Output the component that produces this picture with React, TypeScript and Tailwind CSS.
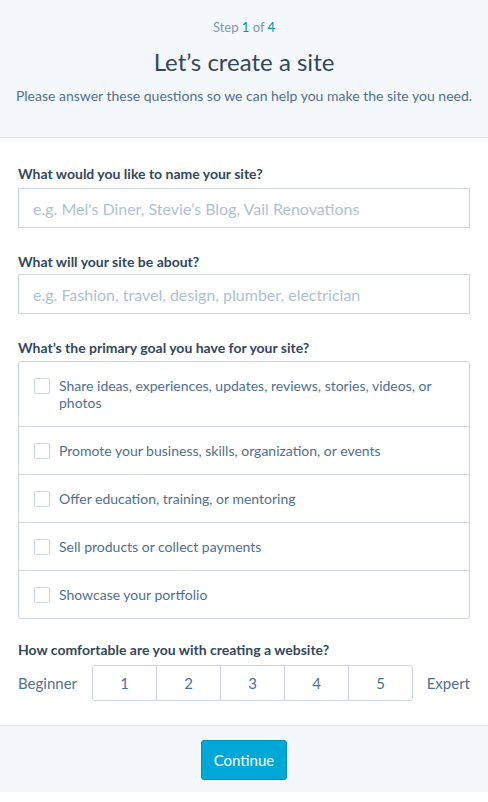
import { useState } from "react";

const goals = [
  "Share ideas, experiences, updates, reviews, stories, videos, or photos",
  "Promote your business, skills, organization, or events",
  "Offer education, training, or mentoring",
  "Sell products or collect payments",
  "Showcase your portfolio",
];

export default function App() {
  const [checked, setChecked] = useState<number[]>([]);
  const [level, setLevel] = useState<number | null>(null);

  return (
    <div
      className="min-h-[802px] bg-white text-[#33475b]"
      style={{ fontFamily: "Lato, 'Liberation Sans', sans-serif" }}
    >
      <header className="flex h-[138px] flex-col items-center border-b border-[#dfe3eb] bg-[#f5f8fa] pt-[17px]">
        <p className="text-[13px] leading-[20px] text-[#7c98b6]">
          Step <span className="text-[#0091ae]">1</span> of <span className="text-[#0091ae]">4</span>
        </p>
        <h1 className="mt-[10px] text-[24px] leading-[30px]">Let’s create a site</h1>
        <p className="mt-[9px] text-[14px] leading-[20px] text-[#516f90]">
          Please answer these questions so we can help you make the site you need.
        </p>
      </header>

      <form className="px-[18px] pt-[26px] pb-[24px]">
        <label className="block text-[14px] font-bold leading-[20px]">
          What would you like to name your site?
        </label>
        <input
          className="mt-[4px] block h-[40px] w-full border border-[#cbd6e2] px-[14px] text-[16px] placeholder:text-[#b0c1d4] outline-none"
          placeholder="e.g. Mel's Diner, Stevie’s Blog, Vail Renovations"
        />

        <label className="mt-[24px] block text-[14px] font-bold leading-[20px]">
          What will your site be about?
        </label>
        <input
          className="mt-[2px] block h-[40px] w-full border border-[#cbd6e2] px-[14px] text-[16px] placeholder:text-[#b0c1d4] outline-none"
          placeholder="e.g. Fashion, travel, design, plumber, electrician"
        />

        <label className="mt-[24px] block text-[14px] font-bold leading-[20px]">
          What’s the primary goal you have for your site?
        </label>
        <div className="mt-[3px] rounded-[3px] border border-[#cbd6e2]">
          {goals.map((g, i) => (
            <label
              key={g}
              className="flex cursor-pointer items-start gap-[9px] border-b border-[#cbd6e2] px-[15px] py-[15px] last:border-b-0"
            >
              <input
                type="checkbox"
                checked={checked.includes(i)}
                onChange={() =>
                  setChecked((c) => (c.includes(i) ? c.filter((x) => x !== i) : [...c, i]))
                }
                className="mt-[1px] h-[16px] w-[16px] shrink-0 appearance-none rounded-[2px] border border-[#cbd6e2] bg-white checked:bg-[#00a8d8]"
              />
              <span className="text-[14px] leading-[17px] text-[#516f90]">{g}</span>
            </label>
          ))}
        </div>

        <label className="mt-[21px] block text-[14px] font-bold leading-[20px]">
          How comfortable are you with creating a website?
        </label>
        <div className="mt-[5px] flex items-center">
          <span className="w-[74px] text-[15px] text-[#516f90]">Beginner</span>
          <div className="flex h-[36px] flex-1 overflow-hidden rounded-[3px] border border-[#cbd6e2]">
            {[1, 2, 3, 4, 5].map((n) => (
              <button
                key={n}
                type="button"
                onClick={() => setLevel(n)}
                className={
                  "flex-1 border-r border-[#cbd6e2] text-[15px] text-[#516f90] last:border-r-0 " +
                  (level === n ? "bg-[#e5f5f8]" : "bg-white")
                }
              >
                {n}
              </button>
            ))}
          </div>
          <span className="w-[57px] text-right text-[15px] text-[#516f90]">Expert</span>
        </div>
      </form>

      <footer className="flex h-[67px] items-center justify-center border-t border-[#dfe3eb] bg-[#f5f8fa]">
        <button
          type="button"
          className="mt-[2px] h-[40px] w-[86px] rounded-[3px] border border-[#0090bd] bg-[#00a8d8] text-[15px] text-white"
        >
          Continue
        </button>
      </footer>
    </div>
  );
}
